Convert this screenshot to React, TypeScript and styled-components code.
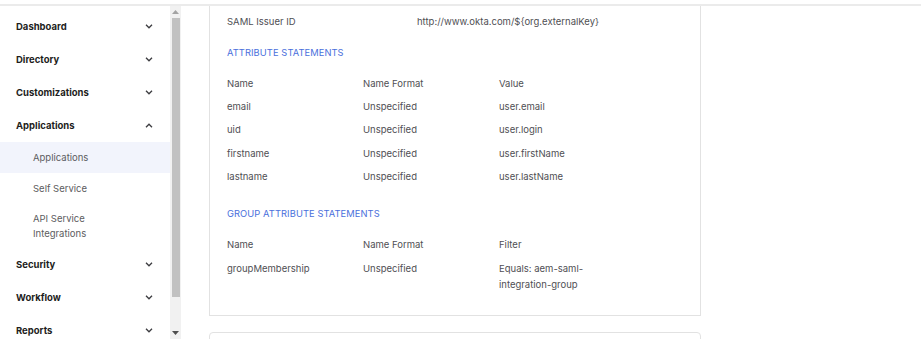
import React from 'react';
import styled, { createGlobalStyle } from 'styled-components';

const GlobalStyle = createGlobalStyle`
    html, body {
        margin: 0;
        padding: 0;
        background: #ffffff;
        font-family: Inter, "Noto Sans", "Liberation Sans", sans-serif;
    }
`;

interface NavItem {
    label: string;
    open?: boolean;
    children?: { label: string; active?: boolean }[];
}

const navItems: NavItem[] = [
    { label: 'Dashboard' },
    { label: 'Directory' },
    { label: 'Customizations' },
    {
        label: 'Applications',
        open: true,
        children: [
            { label: 'Applications', active: true },
            { label: 'Self Service' },
            { label: 'API Service Integrations' },
        ],
    },
    { label: 'Security' },
    { label: 'Workflow' },
    { label: 'Reports' },
];

const attributes = [
    { name: 'email', format: 'Unspecified', value: 'user.email' },
    { name: 'uid', format: 'Unspecified', value: 'user.login' },
    { name: 'firstname', format: 'Unspecified', value: 'user.firstName' },
    { name: 'lastname', format: 'Unspecified', value: 'user.lastName' },
];

const Chevron: React.FC<{ up?: boolean }> = ({ up }) => (
    <svg width="8" height="5" viewBox="0 0 8 5">
        <polyline
            points={up ? '1,4.2 4,1.2 7,4.2' : '1,0.8 4,3.8 7,0.8'}
            fill="none"
            stroke="#3c3c40"
            strokeWidth="1.3"
        />
    </svg>
);

const App: React.FC = () => {
    return (
        <Page>
            <GlobalStyle />
            <TopRule />
            <Main>
                <Sidebar>
                    {navItems.map((item) => (
                        <React.Fragment key={item.label}>
                            <NavHeader>
                                <span>{item.label}</span>
                                <Chevron up={item.open} />
                            </NavHeader>
                            {item.children?.map((child) => (
                                <SubItem key={child.label} $active={child.active}>
                                    {child.label}
                                </SubItem>
                            ))}
                        </React.Fragment>
                    ))}
                </Sidebar>

                <ScrollTrack>
                    <ScrollArrow>
                        <svg width="7" height="4" viewBox="0 0 7 4">
                            <polygon points="0,4 3.5,0 7,4" fill="#a3a3a3" />
                        </svg>
                    </ScrollArrow>
                    <ScrollThumb />
                    <ScrollSpace />
                    <ScrollArrow>
                        <svg width="7" height="4" viewBox="0 0 7 4">
                            <polygon points="0,0 3.5,4 7,0" fill="#505050" />
                        </svg>
                    </ScrollArrow>
                </ScrollTrack>

                <Content>
                    <Card>
                        <IssuerRow>
                            <span>SAML Issuer ID</span>
                            <span>http://www.okta.com/${'{'}org.externalKey{'}'}</span>
                        </IssuerRow>

                        <SectionTitle $gap={15}>ATTRIBUTE STATEMENTS</SectionTitle>
                        <Table $gap={11}>
                            <Row>
                                <Cell>Name</Cell>
                                <Cell>Name Format</Cell>
                                <Cell>Value</Cell>
                            </Row>
                            {attributes.map((a) => (
                                <Row key={a.name}>
                                    <Cell>{a.name}</Cell>
                                    <Cell>{a.format}</Cell>
                                    <Cell>{a.value}</Cell>
                                </Row>
                            ))}
                        </Table>

                        <SectionTitle $gap={17}>GROUP ATTRIBUTE STATEMENTS</SectionTitle>
                        <Table $gap={12}>
                            <Row>
                                <Cell>Name</Cell>
                                <Cell>Name Format</Cell>
                                <Cell>Filter</Cell>
                            </Row>
                            <Row>
                                <Cell>groupMembership</Cell>
                                <Cell>Unspecified</Cell>
                                <Cell>
                                    Equals: aem-saml-
                                    <br />
                                    integration-group
                                </Cell>
                            </Row>
                        </Table>
                    </Card>
                    <NextCard />
                </Content>
            </Main>
        </Page>
    );
};

export default App;

// Styled-components

const Page = styled.div`
    width: 921px;
    height: 339px;
    overflow: hidden;
    display: flex;
    flex-direction: column;
    background: #ffffff;
`;

const TopRule = styled.div`
    height: 4px;
    flex-shrink: 0;
    border-bottom: 2px solid #ebebeb;
`;

const Main = styled.div`
    flex: 1;
    display: flex;
    min-height: 0;
`;

const Sidebar = styled.nav`
    width: 170px;
    flex-shrink: 0;
    padding-top: 4px;
    overflow: hidden;
`;

const NavHeader = styled.div`
    height: 33px;
    display: flex;
    align-items: center;
    justify-content: space-between;
    padding: 0 17px 0 16px;
    font-size: 9.5px;
    font-weight: 700;
    color: #1d1d21;
    svg {
        flex-shrink: 0;
    }
`;

const SubItem = styled.div<{ $active?: boolean }>`
    min-height: 31px;
    box-sizing: border-box;
    display: flex;
    align-items: center;
    padding: 7px 60px 7px 33px;
    font-size: 9.5px;
    line-height: 15px;
    color: #5c5c60;
    background: ${(p) => (p.$active ? '#f2f4fc' : 'transparent')};
`;

const ScrollTrack = styled.div`
    width: 11px;
    flex-shrink: 0;
    background: #f1f1f1;
    display: flex;
    flex-direction: column;
    align-items: center;
`;

const ScrollArrow = styled.div`
    height: 12px;
    display: flex;
    align-items: center;
    justify-content: center;
`;

const ScrollThumb = styled.div`
    width: 8px;
    height: 279px;
    background: #c1c1c1;
`;

const ScrollSpace = styled.div`
    flex: 1;
`;

const Content = styled.main`
    flex: 1;
    padding-left: 28px;
    display: flex;
    flex-direction: column;
    gap: 16px;
`;

const Card = styled.section`
    width: 492px;
    box-sizing: border-box;
    border: 1px solid #e2e2e2;
    border-top: none;
    padding: 3px 17px 19px;
    font-size: 9.5px;
    color: #4f4f54;
`;

const IssuerRow = styled.div`
    display: grid;
    grid-template-columns: 190px 1fr;
    line-height: 16px;
    padding-top: 5px;
`;

const SectionTitle = styled.h3<{ $gap?: number }>`
    margin: ${(p) => p.$gap ?? 15}px 0 0;
    font-size: 9.3px;
    font-weight: 400;
    line-height: 16px;
    color: #4a6fdc;
    letter-spacing: 0.1px;
`;

const Table = styled.div<{ $gap?: number }>`
    margin-top: ${(p) => p.$gap ?? 12}px;
`;

const Row = styled.div`
    display: grid;
    grid-template-columns: 136px 136px 1fr;
    padding: 3.67px 0;
    line-height: 16px;
`;

const Cell = styled.div``;

const NextCard = styled.div`
    width: 492px;
    height: 40px;
    flex-shrink: 0;
    box-sizing: border-box;
    border: 1px solid #e2e2e2;
    border-radius: 4px;
`;
